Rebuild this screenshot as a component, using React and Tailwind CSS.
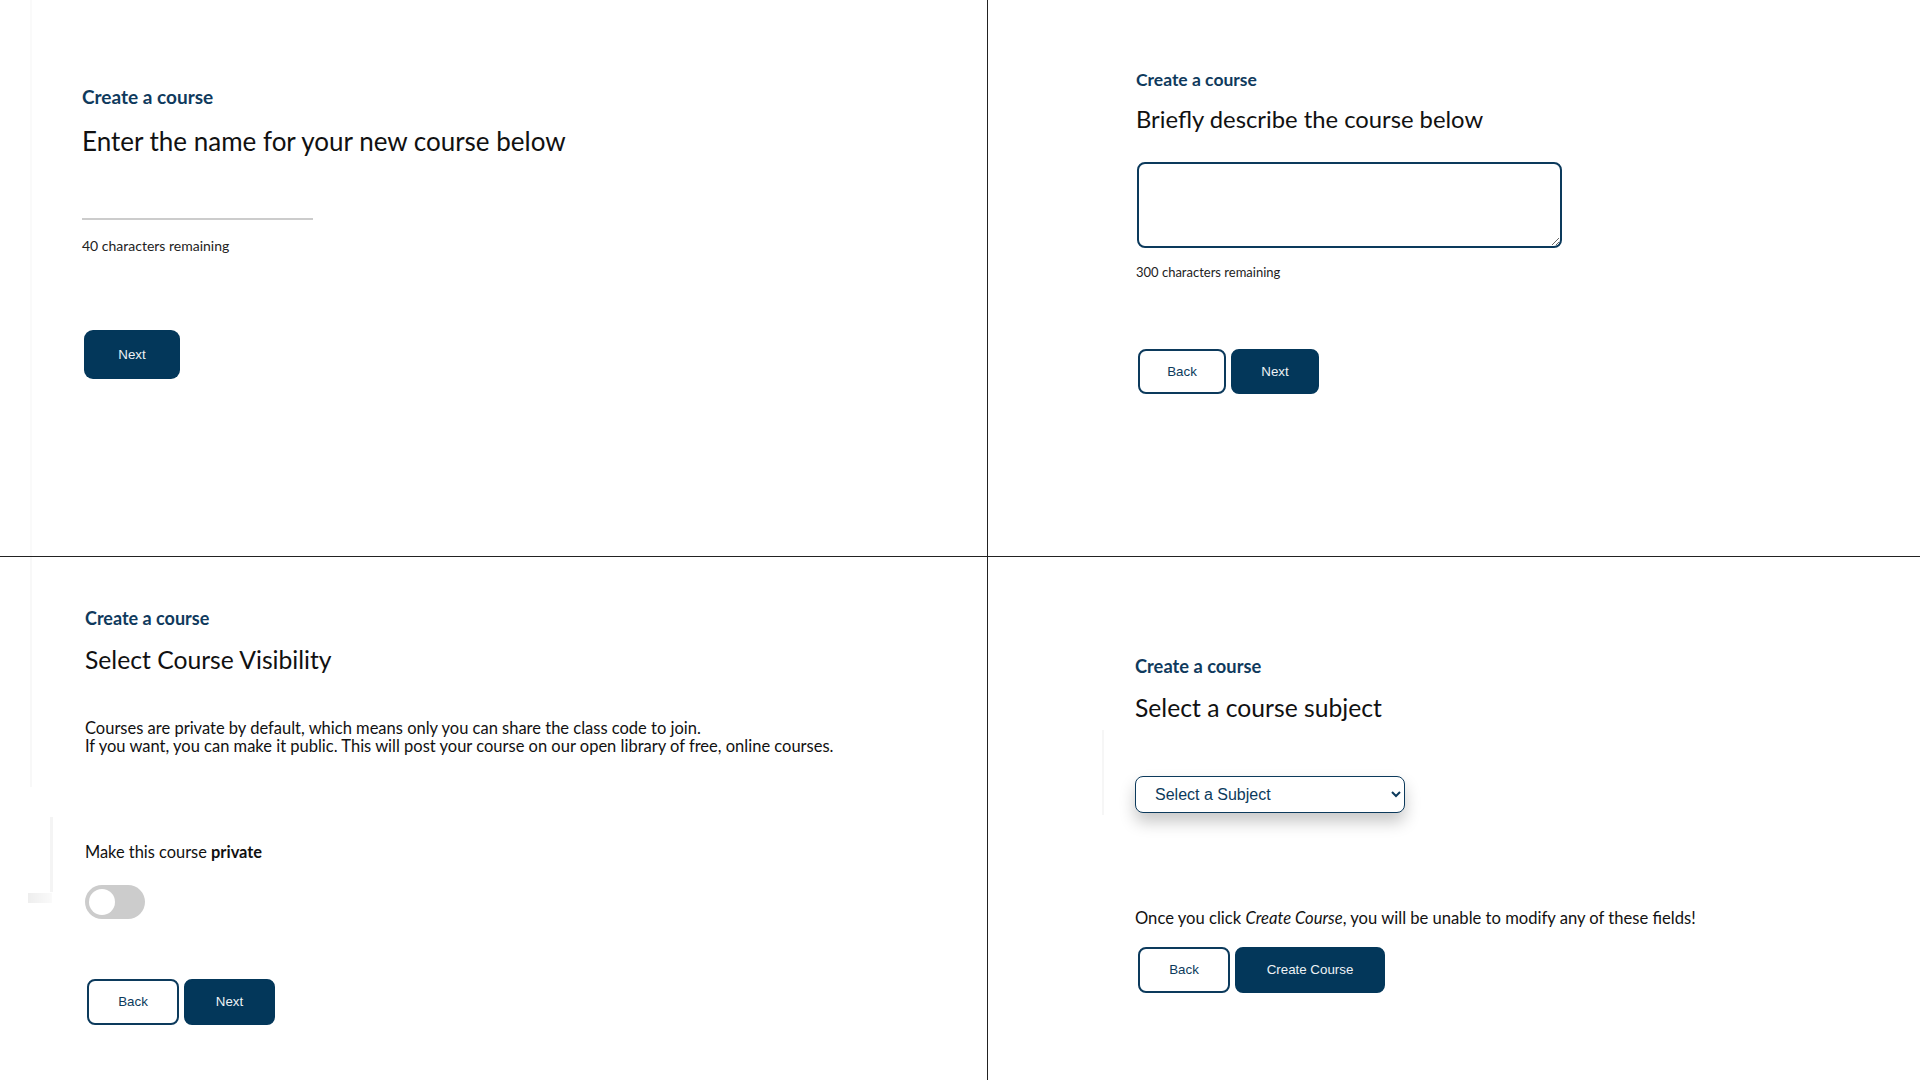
import React from "react";

const btnFont = "font-['Liberation_Sans',Arial,sans-serif] text-[13.33px]";

function Label({ className = "" }) {
  return (
    <div className={"font-bold text-[#0f3a5d] " + className}>Create a course</div>
  );
}

export default function App() {
  return (
    <div className="w-[1920px] h-[1080px] bg-white font-['Lato',sans-serif] text-[#111] grid grid-cols-[988px_932px] grid-rows-[557px_523px] overflow-hidden">
      {/* Top-left */}
      <div className="relative border-r border-b border-[#222] pl-[82px] pt-[85px] flex flex-col items-start">
        <div className="absolute left-[30px] top-0 h-full w-[2px] bg-[#fafafa]" />
        <Label className="text-[19px] leading-[24px]" />
        <h2 className="mt-[16px] text-[26px] leading-[32px]">Enter the name for your new course below</h2>
        <input
          type="text"
          className="mt-[33px] w-[231px] h-[30px] border-0 border-b-2 border-[#cccccc] outline-none"
        />
        <div className="mt-[18px] text-[14px] leading-[16px] text-[#222]">40 characters remaining</div>
        <button className={"mt-[76px] ml-[2px] w-[96px] h-[49px] rounded-[9px] bg-[#03375a] text-[#eef2f5] " + btnFont}>
          Next
        </button>
      </div>

      {/* Top-right */}
      <div className="border-b border-[#222] pl-[148px] pt-[68px] flex flex-col items-start">
        <Label className="text-[17.5px] leading-[24px]" />
        <h2 className="mt-[11px] text-[23.8px] leading-[32px]">Briefly describe the course below</h2>
        <textarea className="mt-[27px] ml-[1px] w-[425px] h-[86px] border-2 border-[#0c3a5c] rounded-[8px] bg-white outline-none" />
        <div className="mt-[16px] text-[13px] leading-[16px] text-[#222]">300 characters remaining</div>
        <div className="mt-[69px] ml-[2px] flex gap-[5px]">
          <button className={"w-[88px] h-[45px] rounded-[8px] border-2 border-[#0c3a5c] bg-white text-[#0c3a5c] " + btnFont}>
            Back
          </button>
          <button className={"w-[88px] h-[45px] rounded-[8px] border-2 border-[#03375a] bg-[#03375a] text-[#eef2f5] " + btnFont}>
            Next
          </button>
        </div>
      </div>

      {/* Bottom-left */}
      <div className="relative border-r border-[#222] pl-[85px] pt-[49px] flex flex-col items-start">
        <div className="absolute left-[30px] top-0 h-[230px] w-[2px] bg-[#f8f8f8]" />
        <div className="absolute left-[50px] top-[260px] h-[75px] w-[3px] bg-[#f4f4f4]" />
        <div className="absolute left-[28px] top-[336px] h-[10px] w-[24px] bg-gradient-to-r from-[#eeeeee] to-[#fafafa]" />
        <Label className="text-[18px] leading-[24px]" />
        <h2 className="mt-[14px] text-[24.7px] leading-[32px]">Select Course Visibility</h2>
        <p className="mt-[43px] text-[16.5px] leading-[18px]">
          Courses are private by default, which means only you can share the class code to join.
          <br />
          If you want, you can make it public. This will post your course on our open library of free, online courses.
        </p>
        <div className="mt-[88px] text-[16.4px] leading-[18px]">
          Make this course <span className="font-bold">private</span>
        </div>
        <div className="mt-[24px] w-[60px] h-[34px] rounded-full bg-[#cccccc] flex items-center px-[4px]">
          <div className="w-[26px] h-[26px] rounded-full bg-white" />
        </div>
        <div className="mt-[60px] ml-[2px] flex gap-[5px]">
          <button className={"w-[92px] h-[46px] rounded-[8px] border-2 border-[#0c3a5c] bg-white text-[#0c3a5c] " + btnFont}>
            Back
          </button>
          <button className={"w-[91px] h-[46px] rounded-[8px] border-2 border-[#03375a] bg-[#03375a] text-[#eef2f5] " + btnFont}>
            Next
          </button>
        </div>
      </div>

      {/* Bottom-right */}
      <div className="relative pl-[147px] pt-[97px] flex flex-col items-start">
        <div className="absolute left-[114px] top-[173px] h-[85px] w-[2px] bg-[#f6f6f6]" />
        <Label className="text-[18.3px] leading-[24px]" />
        <h2 className="mt-[14px] text-[24.7px] leading-[32px]">Select a course subject</h2>
        <select
          defaultValue=""
          className="mt-[52px] w-[270px] h-[37px] border border-[#0c3a5c] rounded-[8px] bg-white pl-[15px] pr-[6px] text-[16px] text-[#0c3a5c] font-['Liberation_Sans',Arial,sans-serif] shadow-[0_9px_16px_0_rgba(0,0,0,0.22)] outline-none"
        >
          <option value="">Select a Subject</option>
        </select>
        <p className="mt-[96px] text-[16.6px] leading-[18px]">
          Once you click <em>Create Course</em>, you will be unable to modify any of these fields!
        </p>
        <div className="mt-[20px] ml-[3px] flex gap-[5px]">
          <button className={"w-[92px] h-[46px] rounded-[8px] border-2 border-[#0c3a5c] bg-white text-[#0c3a5c] " + btnFont}>
            Back
          </button>
          <button className={"w-[150px] h-[46px] rounded-[8px] border-2 border-[#03375a] bg-[#03375a] text-[#eef2f5] " + btnFont}>
            Create Course
          </button>
        </div>
      </div>
    </div>
  );
}
